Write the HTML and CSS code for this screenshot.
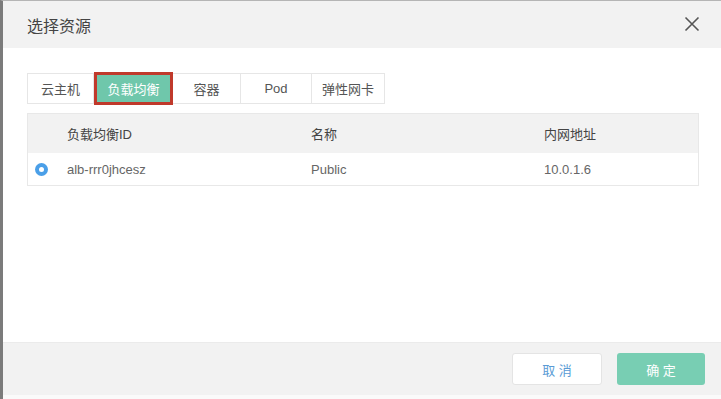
FILE: index.html
```html
<!DOCTYPE html>
<html lang="zh-CN">
<head>
    <meta charset="UTF-8">
    <title>选择资源</title>
    <link rel="stylesheet" href="styles.css">
</head>
<body>
    <div class="modal">
        <div class="modal-header">
            <h2 class="modal-title">选择资源</h2>
            <span class="modal-close">
                <svg width="16" height="16" viewBox="0 0 16 16"><path d="M1.5 1.5L14.5 14.5M14.5 1.5L1.5 14.5" stroke="#555" stroke-width="1.6" fill="none"/></svg>
            </span>
        </div>

        <div class="modal-body">
            <div class="tabs">
                <div class="tab" style="width:67px">云主机</div>
                <div class="tab active" style="width:79px">负载均衡</div>
                <div class="tab" style="width:68px">容器</div>
                <div class="tab" style="width:71px">Pod</div>
                <div class="tab" style="width:73px">弹性网卡</div>
            </div>

            <div class="table">
                <div class="table-row table-head">
                    <div class="cell cell-radio"></div>
                    <div class="cell cell-id">负载均衡ID</div>
                    <div class="cell cell-name">名称</div>
                    <div class="cell cell-ip">内网地址</div>
                </div>
                <div class="table-row">
                    <div class="cell cell-radio"><span class="radio"></span></div>
                    <div class="cell cell-id">alb-rrr0jhcesz</div>
                    <div class="cell cell-name">Public</div>
                    <div class="cell cell-ip">10.0.1.6</div>
                </div>
            </div>
        </div>

        <div class="modal-footer">
            <button class="btn btn-cancel">取 消</button>
            <button class="btn btn-ok">确 定</button>
        </div>
    </div>
</body>
</html>
```

FILE: styles.css
```css
* {
    margin: 0;
    padding: 0;
    box-sizing: border-box;
    font-family: "Liberation Sans", "Noto Sans CJK SC", sans-serif;
}

body {
    background: #fff;
    width: 721px;
    height: 399px;
    overflow: hidden;
}

.modal {
    height: 399px;
    border-left: 3px solid #7b7b7b;
    border-top: 1px solid #b5b5b5;
    display: flex;
    flex-direction: column;
    background: #fff;
}

.modal-header {
    height: 47px;
    background: #f2f2f2;
    display: flex;
    align-items: center;
    justify-content: space-between;
    padding: 0 21px 0 24px;
}

.modal-title {
    font-size: 16px;
    font-weight: normal;
    color: #444;
}

.modal-close {
    display: flex;
    margin-top: -1px;
}

.modal-body {
    flex: 1;
    padding: 25px 22px 0 24px;
}

.tabs {
    display: flex;
    height: 31px;
    margin-bottom: 9px;
}

.tab {
    border: 1px solid #e6e6e6;
    border-left: none;
    display: flex;
    align-items: center;
    justify-content: center;
    font-size: 13px;
    color: #555;
    background: #fff;
}

.tab:first-child {
    border-left: 1px solid #e6e6e6;
}

.tab.active {
    background: #6fc7ab;
    color: #fff;
    border: 3px solid #c0392b;
    margin: -1px 0;
    height: 33px;
}

.table {
    border: 1px solid #e8e8e8;
}

.table-row {
    display: flex;
    align-items: center;
    height: 32px;
    font-size: 13px;
    color: #666;
}

.table-head {
    height: 39px;
    background: #f2f2f2;
    color: #444;
}

.cell-radio {
    width: 39px;
    display: flex;
    padding-left: 7px;
}

.cell-id {
    width: 244px;
}

.cell-name {
    width: 233px;
}

.radio {
    width: 13px;
    height: 13px;
    border-radius: 50%;
    background: #4a9fe8;
    display: flex;
    align-items: center;
    justify-content: center;
}

.radio::after {
    content: "";
    width: 5px;
    height: 5px;
    border-radius: 50%;
    background: #fff;
}

.modal-footer {
    height: 57px;
    flex-shrink: 0;
    background: #f2f2f2;
    border-top: 1px solid #ebebeb;
    border-bottom: 4px solid #fafafa;
    display: flex;
    justify-content: flex-end;
    align-items: flex-start;
    gap: 15px;
    padding: 10px 16px 0 0;
}

.btn {
    height: 32px;
    border-radius: 3px;
    font-size: 13px;
    cursor: pointer;
}

.btn-cancel {
    width: 90px;
    background: #fff;
    border: 1px solid #e4e4e4;
    color: #5a9bd5;
}

.btn-ok {
    width: 88px;
    background: #78ceb3;
    border: none;
    color: #fff;
}
```
